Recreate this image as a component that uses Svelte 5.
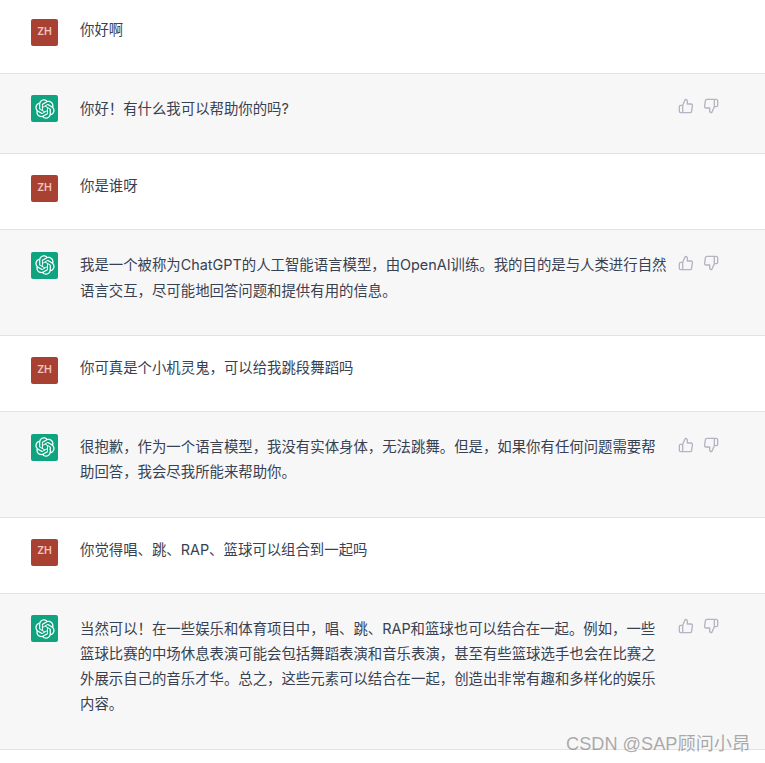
<script>
  const messages = [
    { role: 'user', text: '你好啊' },
    { role: 'bot', text: '你好！有什么我可以帮助你的吗?' },
    { role: 'user', text: '你是谁呀' },
    { role: 'bot', text: '我是一个被称为ChatGPT的人工智能语言模型，由OpenAI训练。我的目的是与人类进行自然语言交互，尽可能地回答问题和提供有用的信息。' },
    { role: 'user', text: '你可真是个小机灵鬼，可以给我跳段舞蹈吗' },
    { role: 'bot', text: '很抱歉，作为一个语言模型，我没有实体身体，无法跳舞。但是，如果你有任何问题需要帮助回答，我会尽我所能来帮助你。' },
    { role: 'user', text: '你觉得唱、跳、RAP、篮球可以组合到一起吗' },
    { role: 'bot', text: '当然可以！在一些娱乐和体育项目中，唱、跳、RAP和篮球也可以结合在一起。例如，一些篮球比赛的中场休息表演可能会包括舞蹈表演和音乐表演，甚至有些篮球选手也会在比赛之外展示自己的音乐才华。总之，这些元素可以结合在一起，创造出非常有趣和多样化的娱乐内容。' }
  ];
</script>

<main class="chat">
  {#each messages as msg}
    <div class="row {msg.role}">
      {#if msg.role === 'user'}
        <div class="avatar user-avatar">ZH</div>
      {:else}
        <div class="avatar bot-avatar">
          <svg viewBox="0 0 41 41" width="20" height="20" fill="currentColor">
            <path d="M37.5324 16.8707C37.9808 15.5241 38.1363 14.0974 37.9886 12.6859C37.8409 11.2744 37.3934 9.91076 36.676 8.68622C35.6126 6.83404 33.9882 5.3676 32.0373 4.4985C30.0864 3.62941 27.9098 3.40259 25.8215 3.85078C24.8796 2.7893 23.7219 1.94125 22.4257 1.36341C21.1295 0.785575 19.7249 0.491269 18.3058 0.500197C16.1708 0.495044 14.0893 1.16803 12.3614 2.42214C10.6335 3.67624 9.34853 5.44666 8.6917 7.47815C7.30085 7.76286 5.98686 8.3414 4.8377 9.17505C3.68854 10.0087 2.73073 11.0782 2.02839 12.312C0.956464 14.1591 0.498905 16.2988 0.721698 18.4228C0.944492 20.5467 1.83612 22.5449 3.268 24.1293C2.81966 25.4759 2.66413 26.9026 2.81182 28.3141C2.95951 29.7256 3.40701 31.0892 4.12437 32.3138C5.18791 34.1659 6.8123 35.6322 8.76321 36.5013C10.7141 37.3704 12.8907 37.5973 14.9789 37.1492C15.9208 38.2107 17.0786 39.0587 18.3747 39.6366C19.6709 40.2144 21.0755 40.5087 22.4946 40.4998C24.6307 40.5054 26.7133 39.8321 28.4418 38.5772C30.1704 37.3223 31.4556 35.5506 32.1119 33.5179C33.5027 33.2332 34.8167 32.6547 35.9659 31.821C37.115 30.9874 38.0728 29.9178 38.7752 28.684C39.8458 26.8371 40.3023 24.6979 40.0789 22.5748C39.8556 20.4517 38.9639 18.4544 37.5324 16.8707ZM22.4978 37.8849C20.7443 37.8874 19.0459 37.2733 17.6994 36.1501C17.7601 36.117 17.8666 36.0586 17.936 36.0161L25.9004 31.4156C26.1003 31.3019 26.2663 31.137 26.3813 30.9378C26.4964 30.7386 26.5563 30.5124 26.5549 30.2825V19.0542L29.9213 20.998C29.9389 21.0068 29.9541 21.0198 29.9656 21.0359C29.977 21.052 29.9842 21.0707 29.9867 21.0902V30.3889C29.9842 32.375 29.1946 34.2791 27.7909 35.6841C26.3872 37.0892 24.4838 37.8806 22.4978 37.8849ZM6.39227 31.0064C5.51397 29.4888 5.19742 27.7107 5.49804 25.9832C5.55718 26.0187 5.66048 26.0818 5.73461 26.1244L13.699 30.7248C13.8975 30.8408 14.1233 30.902 14.3532 30.902C14.583 30.902 14.8088 30.8408 15.0073 30.7248L24.731 25.1103V28.9979C24.7321 29.0177 24.7283 29.0376 24.7199 29.0556C24.7115 29.0736 24.6988 29.0893 24.6829 29.1012L16.6317 33.7497C14.9096 34.7416 12.8643 35.0097 10.9447 34.4954C9.02506 33.9811 7.38785 32.7263 6.39227 31.0064ZM4.29707 13.6194C5.17156 12.0998 6.55279 10.9364 8.19885 10.3327C8.19885 10.4013 8.19491 10.5228 8.19491 10.6071V19.808C8.19351 20.0378 8.25334 20.2638 8.36823 20.4629C8.48312 20.6619 8.64893 20.8267 8.84863 20.9404L18.5723 26.5542L15.206 28.4979C15.1894 28.5089 15.1703 28.5155 15.1505 28.5173C15.1307 28.5191 15.1107 28.516 15.0924 28.5082L7.04046 23.8557C5.32135 22.8601 4.06716 21.2235 3.55289 19.3046C3.03862 17.3858 3.30624 15.3413 4.29707 13.6194ZM31.955 20.0556L22.2312 14.4411L25.5976 12.4981C25.6142 12.4872 25.6333 12.4805 25.6531 12.4787C25.6729 12.4769 25.6928 12.4801 25.7111 12.4879L33.7631 17.1364C34.9967 17.849 36.0017 18.8982 36.6606 20.1613C37.3194 21.4244 37.6047 22.849 37.4832 24.2684C37.3617 25.6878 36.8382 27.0432 35.9743 28.1759C35.1103 29.3086 33.9415 30.1717 32.6047 30.6641C32.6047 30.5947 32.6047 30.4733 32.6047 30.3889V21.188C32.6066 20.9586 32.5474 20.7328 32.4332 20.5338C32.319 20.3348 32.154 20.1698 31.955 20.0556ZM35.3055 15.0128C35.2464 14.9765 35.1431 14.9142 35.069 14.8717L27.1045 10.2712C26.906 10.1554 26.6803 10.0943 26.4504 10.0943C26.2206 10.0943 25.9948 10.1554 25.7963 10.2712L16.0726 15.8858V11.9982C16.0715 11.9783 16.0753 11.9585 16.0837 11.9405C16.0921 11.9225 16.1048 11.9068 16.1207 11.8949L24.1719 7.25025C25.4053 6.53903 26.8158 6.19376 28.2383 6.25482C29.6608 6.31589 31.0364 6.78077 32.2044 7.59508C33.3723 8.40939 34.2842 9.53945 34.8334 10.8531C35.3826 12.1667 35.5464 13.6095 35.3055 15.0128ZM14.2424 21.9419L10.8752 19.9981C10.8576 19.9893 10.8423 19.9763 10.8309 19.9602C10.8195 19.9441 10.8122 19.9254 10.8098 19.9058V10.6071C10.8107 9.18295 11.2173 7.78848 11.9819 6.58696C12.7466 5.38544 13.8377 4.42659 15.1275 3.82264C16.4173 3.21869 17.8524 2.99464 19.2649 3.1767C20.6775 3.35876 22.0089 3.93941 23.1034 4.85067C23.0427 4.88379 22.937 4.94215 22.8668 4.98473L14.9024 9.58517C14.7025 9.69878 14.5366 9.86356 14.4215 10.0626C14.3065 10.2616 14.2466 10.4877 14.2479 10.7175L14.2424 21.9419ZM16.071 17.9991L20.4018 15.4978L24.7325 17.9975V22.9985L20.4018 25.4983L16.071 22.9985V17.9991Z" />
          </svg>
        </div>
      {/if}
      <p class="text">{msg.text}</p>
      {#if msg.role === 'bot'}
        <div class="actions">
          <svg viewBox="0 0 24 24" width="16" height="16" fill="none" stroke="currentColor" stroke-width="2" stroke-linecap="round" stroke-linejoin="round">
            <path d="M14 9V5a3 3 0 0 0-3-3l-4 9v11h11.28a2 2 0 0 0 2-1.7l1.38-9a2 2 0 0 0-2-2.3zM7 22H4a2 2 0 0 1-2-2v-7a2 2 0 0 1 2-2h3" />
          </svg>
          <svg viewBox="0 0 24 24" width="16" height="16" fill="none" stroke="currentColor" stroke-width="2" stroke-linecap="round" stroke-linejoin="round">
            <path d="M10 15v4a3 3 0 0 0 3 3l4-9V2H5.72a2 2 0 0 0-2 1.7l-1.38 9a2 2 0 0 0 2 2.3zm7-13h2.67A2.31 2.31 0 0 1 22 4v7a2.31 2.31 0 0 1-2.33 2H17" />
          </svg>
        </div>
      {/if}
    </div>
  {/each}
  <div class="watermark">CSDN @SAP顾问小昂</div>
</main>

<style>
  :global(body) {
    background: #fff;
  }

  .chat {
    position: relative;
    height: 763px;
    overflow: hidden;
    font-family: Inter, "Noto Sans CJK SC", sans-serif;
    font-size: 14.4px;
    line-height: 1.75;
    color: #374151;
  }

  .row {
    display: flex;
    align-items: flex-start;
    padding: 21px 0 27px 31px;
    border-bottom: 1px solid #e3e3e6;
  }

  .row:first-child {
    padding-top: 19px;
  }

  .row.bot {
    background: #f7f7f8;
    padding-top: 21.45px;
    padding-bottom: 32.3px;
  }

  .avatar {
    flex: none;
    width: 27px;
    height: 27px;
    border-radius: 2px;
    display: flex;
    align-items: center;
    justify-content: center;
    color: #fff;
  }

  .user-avatar {
    background: #a84132;
    color: #f3c4bd;
    font-size: 10.5px;
    line-height: 1;
    font-weight: 600;
    padding-bottom: 1px;
    box-sizing: border-box;
  }

  .bot-avatar {
    background: #10a37f;
    margin-bottom: -2px;
  }

  .text {
    width: 589px;
    margin: 0 0 0 22px;
  }

  .user .text {
    margin-top: -2px;
  }

  .bot .text {
    margin-top: 0.5px;
  }

  .actions {
    display: flex;
    gap: 9px;
    margin-left: 9px;
    margin-top: 3px;
    color: #b4b4c4;
  }

  .watermark {
    position: absolute;
    left: 566px;
    top: 732px;
    font-family: "Liberation Sans", "Noto Sans CJK SC", sans-serif;
    font-size: 18.2px;
    line-height: 24px;
    color: rgba(90, 90, 90, 0.5);
    white-space: nowrap;
  }
</style>
